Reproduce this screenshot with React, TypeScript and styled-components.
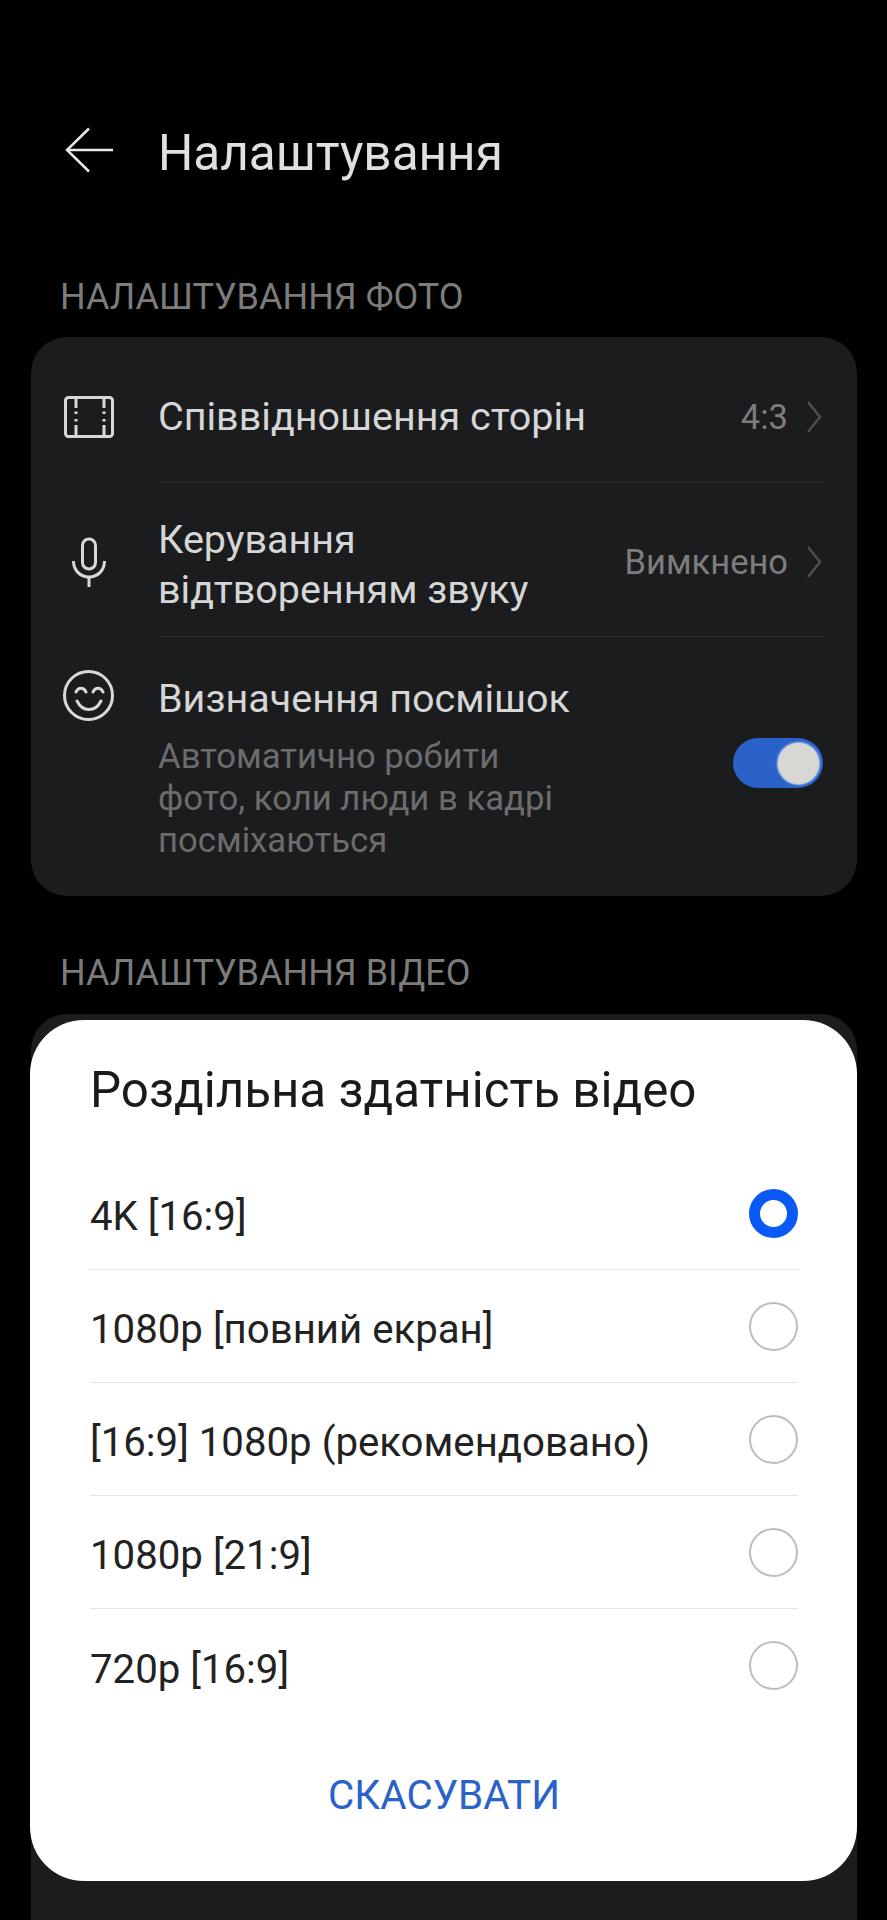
import React from 'react'
import styled, { createGlobalStyle } from 'styled-components'

const GlobalStyle = createGlobalStyle`
  html, body {
    margin: 0;
    padding: 0;
    background: #000;
  }
  * {
    box-sizing: border-box;
  }
`

const Page = styled.div`
  position: relative;
  width: 887px;
  height: 1920px;
  overflow: hidden;
  background: #000;
  font-family: Roboto, "Noto Sans", sans-serif;
  padding: 0 30px 0 31px;
`

const Header = styled.div`
  display: flex;
  align-items: center;
  height: 60px;
  margin-top: 123px;
  padding-left: 33px;
  color: #e8e8e8;
`

const HeaderIcon = styled.div`
  display: flex;
  width: 94px;
  margin-top: -6px;
  flex: none;
`

const PageTitle = styled.div`
  font-size: 49.500px;
  line-height: 60px;
  color: #e0e0e0;
`

const SectionLabel = styled.div<{ $top: number }>`
  font-size: 36px;
  line-height: 40px;
  color: #7c7c7c;
  padding-left: 29px;
  height: 40px;
  margin-top: ${(p) => p.$top}px;
`

const Card = styled.div<{ $top: number }>`
  background: #1b1c1e;
  border-radius: 36px;
  margin-top: ${(p) => p.$top}px;
`

const Row = styled.div<{ $height: number; $nudge: number }>`
  display: flex;
  align-items: center;
  height: ${(p) => p.$height}px;
  padding: ${(p) => p.$nudge}px 35px 0 32px;
  position: relative;
  &::after {
    content: '';
    position: absolute;
    left: 128px;
    right: 30px;
    bottom: 0;
    height: 1px;
    background: #2b2c2e;
  }
`

const RowIcon = styled.div`
  display: flex;
  justify-content: center;
  width: 51px;
  margin-right: 44px;
  flex: none;
`

const RowTitle = styled.div`
  flex: 1;
  font-size: 39.500px;
  line-height: 50px;
  color: #d6d6d6;
`

const TwoLineTitle = styled(RowTitle)`
  padding-top: 5px;
`

const RowValue = styled.div`
  font-size: 34.500px;
  color: #7d7d7d;
`

const Chevron = styled.svg`
  margin-left: 18px;
  flex: none;
`

const SmileRow = styled.div`
  display: flex;
  padding: 0 34px 0 32px;
  height: 259px;
`

const SmileIcon = styled(RowIcon)`
  padding-top: 33px;
`

const SmileText = styled.div`
  flex: 1;
  padding-top: 37px;
`

const SmileTitle = styled.div`
  font-size: 39.500px;
  line-height: 50px;
  color: #d6d6d6;
  margin-bottom: 11px;
`

const SmileHint = styled.div`
  font-size: 34.700px;
  line-height: 42px;
  color: #6c6c6c;
`

const Switch = styled.div`
  display: flex;
  justify-content: flex-end;
  align-items: center;
  width: 90px;
  height: 50px;
  margin-top: 101px;
  padding-right: 4px;
  border-radius: 25px;
  background: #2a62c9;
  flex: none;
`

const SwitchKnob = styled.div`
  width: 41px;
  height: 41px;
  border-radius: 50%;
  background: #d9d7d3;
  box-shadow: 0 0 2px 1px #b9cdf2;
`

const BackCard = styled(Card)`
  height: 1000px;
`

const Dialog = styled.div`
  position: absolute;
  left: 30px;
  right: 30px;
  top: 1020px;
  height: 861px;
  padding: 37px 59px 0 60px;
  background: #fff;
  border-radius: 54px;
`

const DialogTitle = styled.div`
  font-size: 49.300px;
  line-height: 66px;
  color: #1a1a1a;
  margin-bottom: 34px;
`

const Option = styled.div<{ $last?: boolean }>`
  display: flex;
  align-items: center;
  justify-content: space-between;
  height: 113px;
  font-size: 40.200px;
  color: #222;
  border-bottom: ${(p) => (p.$last ? 'none' : '1px solid #e6e6e6')};
`

const OptionLabel = styled.span`
  padding-top: 7px;
`

const Radio = styled.div<{ $checked?: boolean }>`
  width: 49px;
  height: 49px;
  border-radius: 50%;
  border: ${(p) => (p.$checked ? '11px solid #0a59f7' : '2px solid #bdbdbd')};
  flex: none;
`

const CancelButton = styled.div`
  margin-top: 49px;
  text-align: center;
  font-size: 40.400px;
  line-height: 50px;
  color: #2a62c9;
`

const OPTIONS = [
  '4K [16:9]',
  '1080p [повний екран]',
  '[16:9] 1080p (рекомендовано)',
  '1080p [21:9]',
  '720p [16:9]',
]

const BackIcon = () => (
  <svg width="50" height="46" viewBox="0 0 50 46" fill="none" stroke="#e8e8e8" strokeWidth="2.500">
    <path d="M49 23H3" />
    <path d="M25 1.500 3 23l22 21.500" />
  </svg>
)

const RatioIcon = () => (
  <svg width="50" height="42" viewBox="0 0 50 42" fill="none" stroke="#d8d8d8" strokeWidth="3">
    <rect x="1.500" y="1.500" width="47" height="39" rx="3" />
    <path d="M12 3v9M12 29v10M40 3v9M40 29v10" />
    <path d="M12 15.500v2.500M12 23v2.500M40 15.500v2.500M40 23v2.500" />
  </svg>
)

const MicIcon = () => (
  <svg width="36" height="51" viewBox="0 0 36 51" fill="none" stroke="#d8d8d8" strokeWidth="3">
    <rect x="11.500" y="2" width="13" height="30" rx="6.500" />
    <path d="M2.500 24c0 9 6.500 16 15.500 16s15.500-7 15.500-16" />
    <path d="M18 40v10" />
  </svg>
)

const SmileGlyph = () => (
  <svg width="51" height="51" viewBox="0 0 51 51" fill="none" stroke="#d8d8d8" strokeWidth="3" strokeLinecap="round">
    <circle cx="25.500" cy="25.500" r="24" />
    <path d="M13 22c2-5 8-5 10 0M30 22c2-5 8-5 10 0" />
    <path d="M14 31c3 6 7 8.500 12 8.500s9-2.500 12-8.500" />
  </svg>
)

const ChevronIcon = () => (
  <Chevron width="16" height="34" viewBox="0 0 16 34" fill="none" stroke="#4e4e50" strokeWidth="2.500">
    <path d="M2 2l12 15L2 32" />
  </Chevron>
)

const App = () => {
  return (
    <Page>
      <GlobalStyle />
      <Header>
        <HeaderIcon>
          <BackIcon />
        </HeaderIcon>
        <PageTitle>Налаштування</PageTitle>
      </Header>

      <SectionLabel $top={94}>НАЛАШТУВАННЯ ФОТО</SectionLabel>
      <Card $top={20}>
        <Row $height={146} $nudge={14}>
          <RowIcon>
            <RatioIcon />
          </RowIcon>
          <RowTitle>Співвідношення сторін</RowTitle>
          <RowValue>4:3</RowValue>
          <ChevronIcon />
        </Row>
        <Row $height={154} $nudge={4}>
          <RowIcon>
            <MicIcon />
          </RowIcon>
          <TwoLineTitle>
            Керування
            <br />
            відтворенням звуку
          </TwoLineTitle>
          <RowValue>Вимкнено</RowValue>
          <ChevronIcon />
        </Row>
        <SmileRow>
          <SmileIcon>
            <SmileGlyph />
          </SmileIcon>
          <SmileText>
            <SmileTitle>Визначення посмішок</SmileTitle>
            <SmileHint>
              Автоматично робити
              <br />
              фото, коли люди в кадрі
              <br />
              посміхаються
            </SmileHint>
          </SmileText>
          <Switch>
            <SwitchKnob />
          </Switch>
        </SmileRow>
      </Card>

      <SectionLabel $top={57}>НАЛАШТУВАННЯ ВІДЕО</SectionLabel>
      <BackCard $top={21} />

      <Dialog>
        <DialogTitle>Роздільна здатність відео</DialogTitle>
        {OPTIONS.map((label, i) => (
          <Option key={label} $last={i === OPTIONS.length - 1}>
            <OptionLabel>{label}</OptionLabel>
            <Radio $checked={i === 0} />
          </Option>
        ))}
        <CancelButton>СКАСУВАТИ</CancelButton>
      </Dialog>
    </Page>
  )
}

export default App
